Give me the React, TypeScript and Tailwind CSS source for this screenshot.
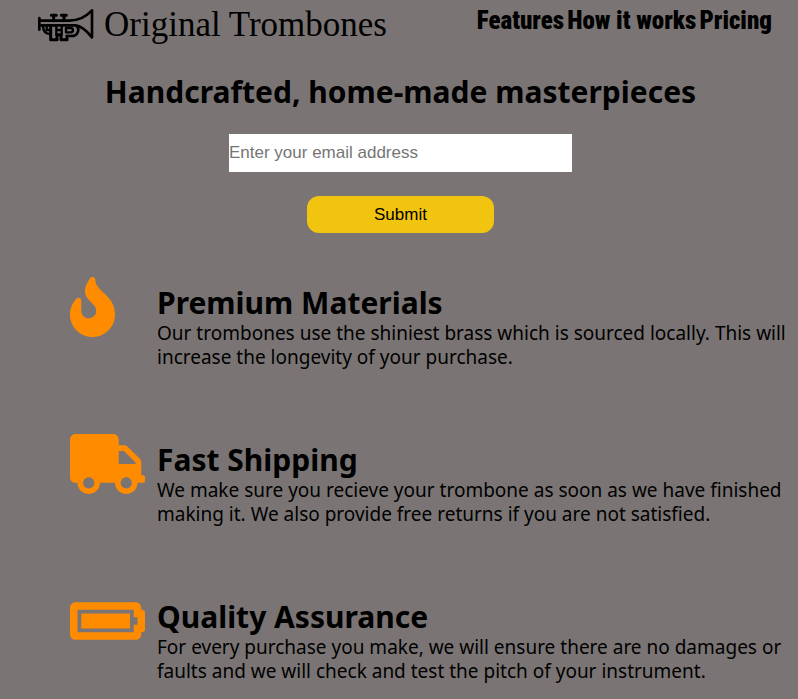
import React from "react";
import type { IconType } from "react-icons";
import { FaFire, FaTruck, FaBatteryFull } from "react-icons/fa";

interface Feature {
  title: string;
  text: string;
  Icon: IconType;
}

const features: Feature[] = [
  {
    title: "Premium Materials",
    text: "Our trombones use the shiniest brass which is sourced locally. This will increase the longevity of your purchase.",
    Icon: FaFire,
  },
  {
    title: "Fast Shipping",
    text: "We make sure you recieve your trombone as soon as we have finished making it. We also provide free returns if you are not satisfied.",
    Icon: FaTruck,
  },
  {
    title: "Quality Assurance",
    text: "For every purchase you make, we will ensure there are no damages or faults and we will check and test the pitch of your instrument.",
    Icon: FaBatteryFull,
  },
];

const headingFont = "font-['Tahoma','Noto_Sans',sans-serif] font-bold";

function BrassLogo() {
  return (
    <svg
      viewBox="24 24 168 105"
      className="h-[35px] w-[56px] shrink-0"
      fill="none"
      stroke="black"
      strokeWidth="7"
      strokeLinecap="round"
      strokeLinejoin="round"
      aria-hidden="true"
    >
      <path d="M28 54V89M28 62H118C146 62 168 50 186 31V112C170 92 152 76 134 76H28" strokeWidth="8" />
      <path d="M64 46H79M94 46H109M71 47V62M102 47V62" strokeWidth="9" />
      <path d="M39 78C39 94 46 102 62 102M50 78V90H62" />
      <path d="M62 78V119H81V104H93V119H111V108" strokeWidth="9" />
      <path d="M79 78V104M95 78V104M79 90H95" />
      <path d="M137 76C152 86 144 108 124 108H111" strokeWidth="8" />
      <path d="M108 84H120C132 84 132 97 120 97H108Z" />
    </svg>
  );
}

export default function App() {
  return (
    <div className="min-h-screen bg-[#7a7574] pb-3 text-black">
      <header className="flex items-start justify-between pr-[26px] pl-[38px]">
        <a href="#top" className="flex items-center gap-2.5 pt-[5px]">
          <BrassLogo />
          <span className="font-['Liberation_Serif',serif] text-[35px] leading-10 whitespace-nowrap">
            Original Trombones
          </span>
        </a>
        <nav className="flex gap-[3px] pt-[3px] font-['Impact','Roboto_Condensed',sans-serif] text-[25px] leading-9 font-black whitespace-nowrap">
          <a href="#features">Features</a>
          <a href="#how-it-works">How it works</a>
          <a href="#pricing">Pricing</a>
        </nav>
      </header>

      <main id="top">
        <section id="how-it-works" className="flex flex-col items-center pt-[29px] pl-[3px]">
          <h1 className={`${headingFont} text-[30px] leading-9`}>
            Handcrafted, home-made masterpieces
          </h1>
          <form
            className="mt-6 flex w-full flex-col items-center gap-6 font-['Liberation_Sans',Arial,sans-serif] text-[17px]"
            onSubmit={(event: React.FormEvent) => event.preventDefault()}
          >
            <input
              type="email"
              aria-label="Email address"
              placeholder="Enter your email address"
              className="h-[38px] w-[343px] bg-white placeholder:text-[#757575]"
            />
            <button type="submit" className="h-[37px] w-[187px] rounded-xl bg-[#f1c40f]">
              Submit
            </button>
          </form>
        </section>

        <section id="features" className="flex flex-col gap-[61px] pt-11 pr-3 pl-[70px]">
          {features.map(({ title, text, Icon }) => (
            <article key={title} className="flex gap-3">
              <Icon
                preserveAspectRatio="xMinYMid meet"
                className="h-[60px] w-[75px] shrink-0 text-[#ff8c00]"
              />
              <div className="min-w-0 flex-1 pt-2">
                <h2 className={`${headingFont} text-[30px] leading-9`}>{title}</h2>
                <p className="pb-1 font-['Tahoma','Noto_Sans',sans-serif] text-[19px] leading-6">
                  {text}
                </p>
              </div>
            </article>
          ))}
        </section>
      </main>
    </div>
  );
}
